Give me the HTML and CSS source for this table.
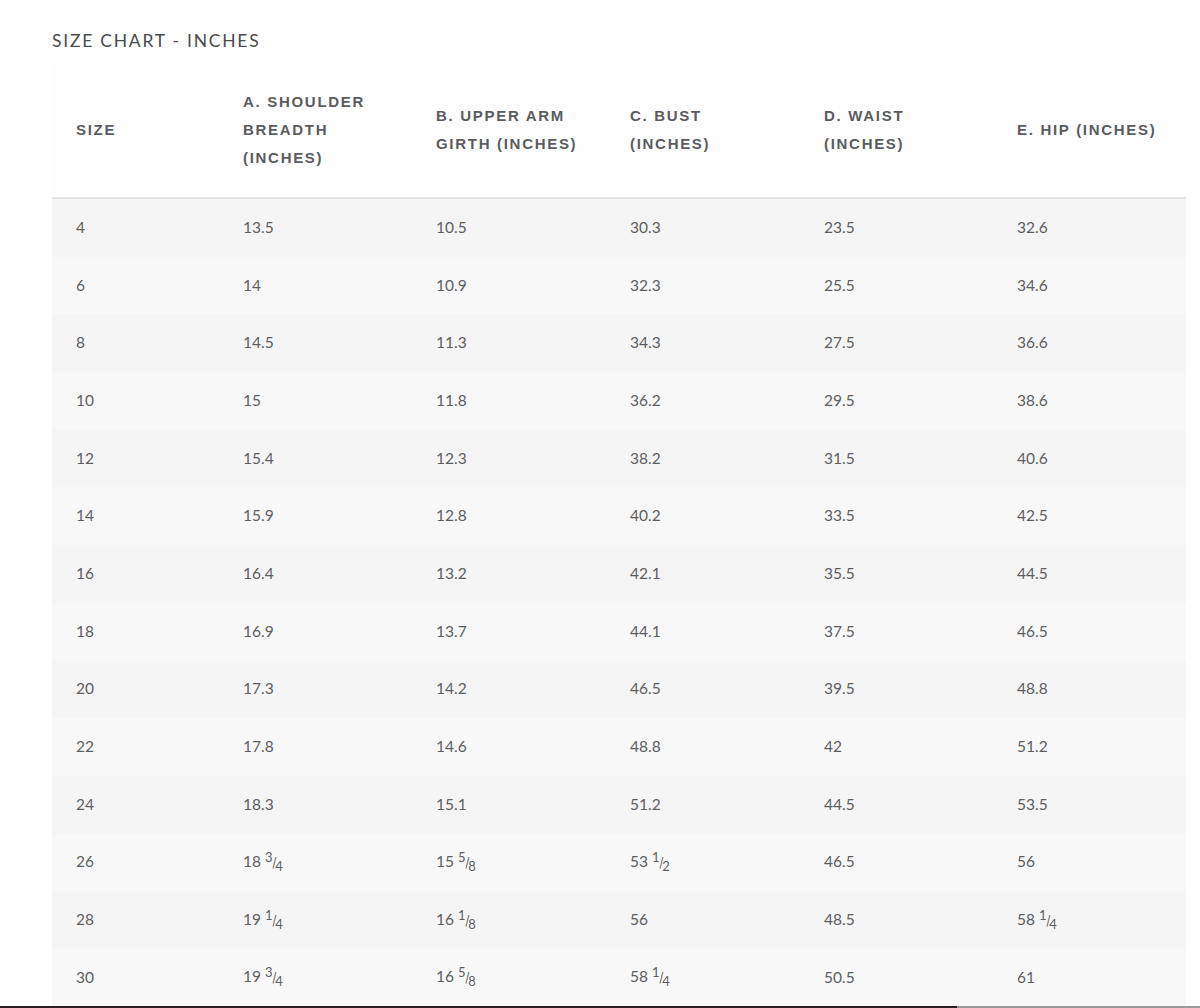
FILE: index.html
```html
<!DOCTYPE html>
<html>
<head>
<meta charset="utf-8">
<link rel="stylesheet" href="styles.css">
</head>
<body>
<div class="page">
  <h2 class="title">SIZE CHART - INCHES</h2>
  <table class="chart">
    <thead>
      <tr>
        <th class="c1">SIZE</th>
        <th class="c2">A. SHOULDER BREADTH (INCHES)</th>
        <th class="c3">B. UPPER ARM GIRTH (INCHES)</th>
        <th class="c4">C. BUST<br>(INCHES)</th>
        <th class="c5">D. WAIST<br>(INCHES)</th>
        <th class="c6">E. HIP (INCHES)</th>
      </tr>
    </thead>
    <tbody>
      <tr><td>4</td><td>13.5</td><td>10.5</td><td>30.3</td><td>23.5</td><td>32.6</td></tr>
      <tr><td>6</td><td>14</td><td>10.9</td><td>32.3</td><td>25.5</td><td>34.6</td></tr>
      <tr><td>8</td><td>14.5</td><td>11.3</td><td>34.3</td><td>27.5</td><td>36.6</td></tr>
      <tr><td>10</td><td>15</td><td>11.8</td><td>36.2</td><td>29.5</td><td>38.6</td></tr>
      <tr><td>12</td><td>15.4</td><td>12.3</td><td>38.2</td><td>31.5</td><td>40.6</td></tr>
      <tr><td>14</td><td>15.9</td><td>12.8</td><td>40.2</td><td>33.5</td><td>42.5</td></tr>
      <tr><td>16</td><td>16.4</td><td>13.2</td><td>42.1</td><td>35.5</td><td>44.5</td></tr>
      <tr><td>18</td><td>16.9</td><td>13.7</td><td>44.1</td><td>37.5</td><td>46.5</td></tr>
      <tr><td>20</td><td>17.3</td><td>14.2</td><td>46.5</td><td>39.5</td><td>48.8</td></tr>
      <tr><td>22</td><td>17.8</td><td>14.6</td><td>48.8</td><td>42</td><td>51.2</td></tr>
      <tr><td>24</td><td>18.3</td><td>15.1</td><td>51.2</td><td>44.5</td><td>53.5</td></tr>
      <tr><td>26</td><td>18 <span class="frac"><span class="num">3</span><span class="sl">/</span><span class="den">4</span></span></td><td>15 <span class="frac"><span class="num">5</span><span class="sl">/</span><span class="den">8</span></span></td><td>53 <span class="frac"><span class="num">1</span><span class="sl">/</span><span class="den">2</span></span></td><td>46.5</td><td>56</td></tr>
      <tr><td>28</td><td>19 <span class="frac"><span class="num">1</span><span class="sl">/</span><span class="den">4</span></span></td><td>16 <span class="frac"><span class="num">1</span><span class="sl">/</span><span class="den">8</span></span></td><td>56</td><td>48.5</td><td>58 <span class="frac"><span class="num">1</span><span class="sl">/</span><span class="den">4</span></span></td></tr>
      <tr><td>30</td><td>19 <span class="frac"><span class="num">3</span><span class="sl">/</span><span class="den">4</span></span></td><td>16 <span class="frac"><span class="num">5</span><span class="sl">/</span><span class="den">8</span></span></td><td>58 <span class="frac"><span class="num">1</span><span class="sl">/</span><span class="den">4</span></span></td><td>50.5</td><td>61</td></tr>
    </tbody>
  </table>
</div>
<div class="footer-strip"><div class="dark"></div><div class="light"></div></div>
</body>
</html>
```

FILE: styles.css
```css
html, body {
  margin: 0;
  padding: 0;
  background: #ffffff;
}
body {
  width: 1200px;
  height: 1008px;
  overflow: hidden;
  display: flex;
  flex-direction: column;
}
.page {
  flex: 1;
  padding: 0 14px 0 52px;
  overflow: hidden;
}
.title {
  margin: 31px 0 0 0;
  font-family: "Lato", "Open Sans", sans-serif;
  font-weight: 400;
  font-size: 17.5px;
  line-height: 20px;
  letter-spacing: 1.75px;
  color: #4a4b4d;
}
.chart {
  margin-top: 10px;
  width: 1134px;
  border-collapse: collapse;
  table-layout: fixed;
}
.chart th {
  font-family: "Liberation Sans", Arial, sans-serif;
  font-weight: 700;
  font-size: 15px;
  line-height: 28px;
  letter-spacing: 1.7px;
  color: #5a5c61;
  text-align: left;
  vertical-align: middle;
  padding: 27px 20px 25px 24px;
  height: 84px;
  background: #fefefe;
  border-bottom: 2px solid #e3e3e3;
}
.chart th.c1 { width: 123px; }
.chart th.c2 { width: 149px; }
.chart th.c3 { width: 150px; }
.chart th.c4 { width: 150px; }
.chart th.c5 { width: 149px; }
.chart th.c6 { width: 149px; }
.chart td {
  font-family: "Lato", "Open Sans", sans-serif;
  font-size: 15.5px;
  color: #5d5e62;
  padding: 0 20px 2px 24px;
  height: 55.7px;
  line-height: 20px;
  vertical-align: middle;
}
.chart tbody tr:nth-child(odd) td { background: #f5f5f5; }
.chart tbody tr:nth-child(even) td { background: #f8f8f8; }
.frac {
  display: inline-block;
  font-feature-settings: "frac" 0, "calt" 0, "liga" 0;
}
.frac .num {
  display: inline-block;
  font-size: 13px;
  position: relative;
  top: -5px;
}
.frac .sl {
  display: inline-block;
  font-family: "DejaVu Sans", sans-serif;
  font-size: 14px;
  margin: 0 -1px;
  transform: scaleX(0.8);
}
.frac .den {
  display: inline-block;
  font-size: 13px;
  position: relative;
  top: 4px;
}
.footer-strip {
  display: flex;
  height: 2px;
  flex: none;
}
.footer-strip .dark {
  width: 957px;
  background: #2a2222;
}
.footer-strip .light {
  flex: 1;
  background: #9a9a9a;
}
```
